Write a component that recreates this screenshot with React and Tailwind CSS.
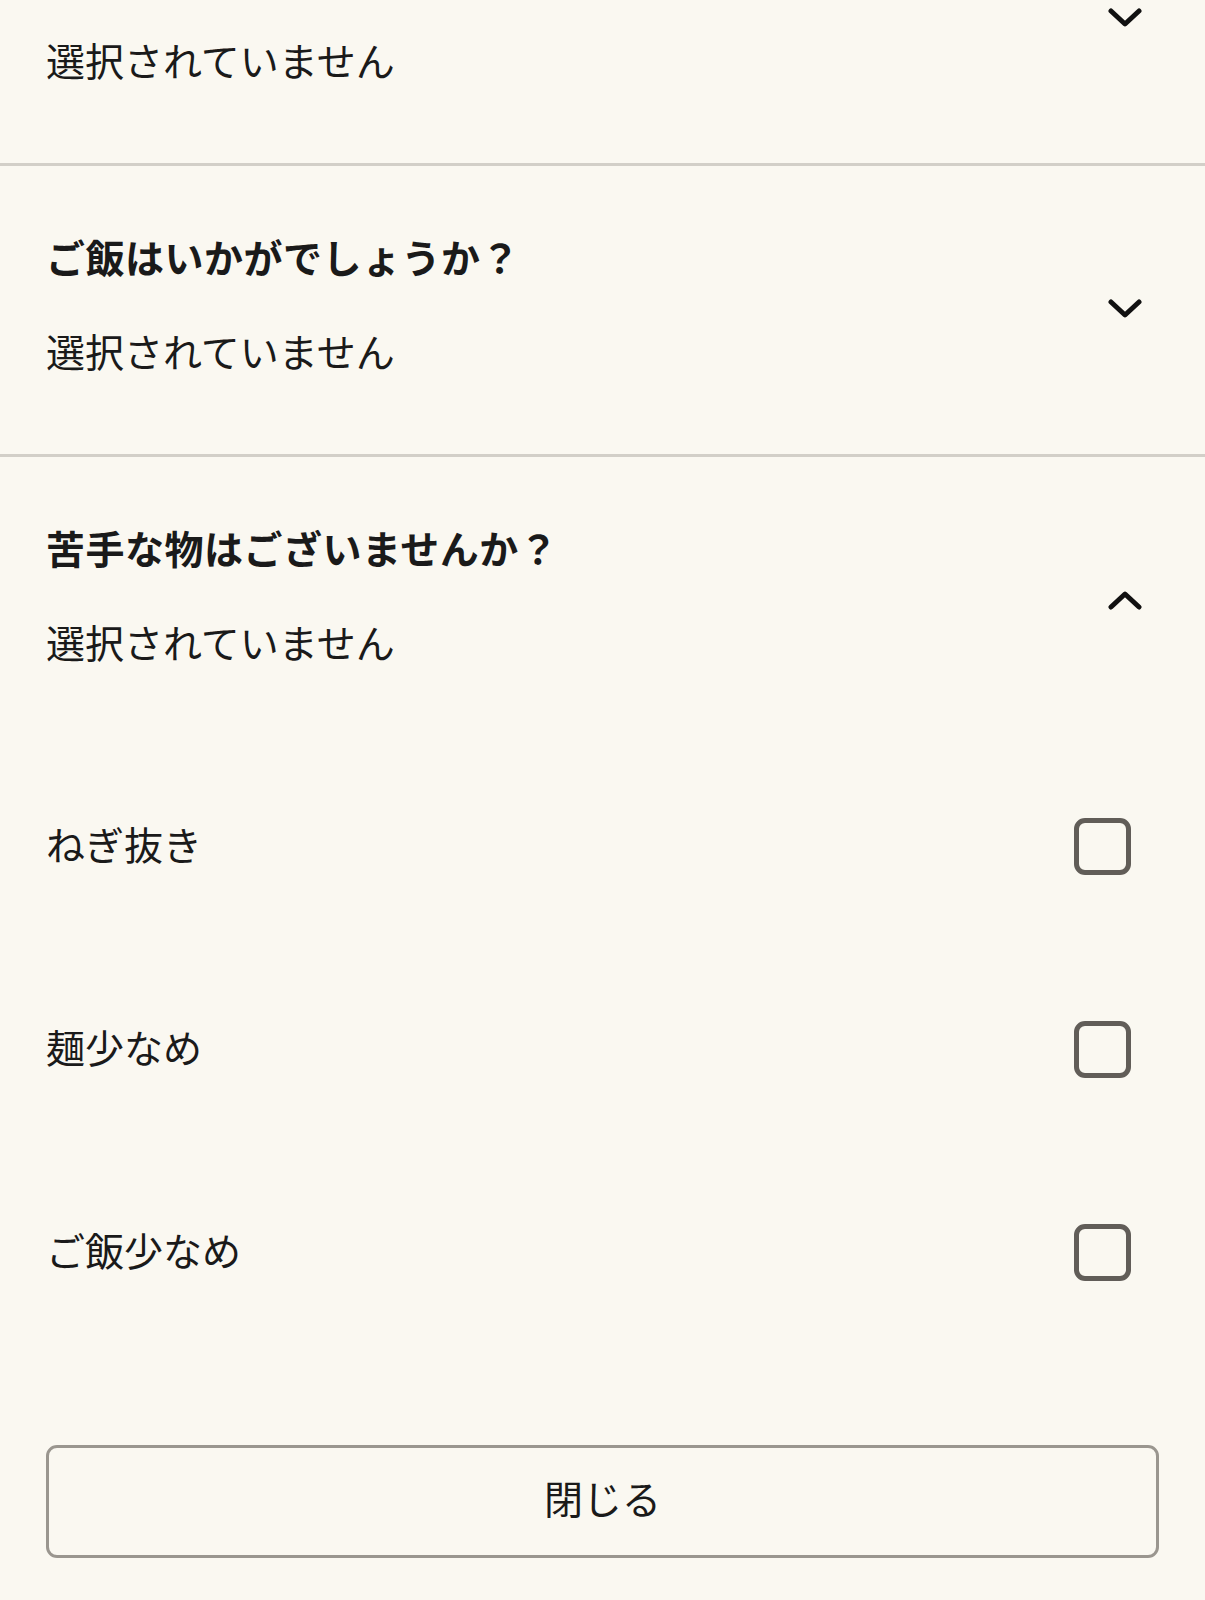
import React, { useState } from 'react';

const font = { fontFamily: '"Noto Sans CJK JP", "Noto Sans", sans-serif' };

// first question is scrolled past its title, only the value row shows
const questions = [
  { id: 'size', title: null },
  { id: 'rice', title: 'ご飯はいかがでしょうか？' },
  { id: 'dislike', title: '苦手な物はございませんか？' },
];

const options = ['ねぎ抜き', '麺少なめ', 'ご飯少なめ'];

const Chevron = ({ up }) => (
  <svg width="34" height="22" viewBox="0 0 34 22" fill="none" className="shrink-0 mt-[12px]">
    <polyline
      points={up ? '3,18 17,5 31,18' : '3,4 17,17 31,4'}
      stroke="#111"
      strokeWidth="5"
      strokeLinecap="round"
      strokeLinejoin="round"
    />
  </svg>
);

const App = () => {
  const [open, setOpen] = useState('dislike');
  const [checked, setChecked] = useState({});

  return (
    <div className="h-[1600px] overflow-hidden bg-[#faf8f1] text-[#1a1a1a]" style={font}>
      <div className="-mt-[125px]">
        {questions.map(q => (
          <div key={q.id} className="border-b-[3px] border-[#d2cfc8] last:border-b-0">
            <button
              type="button"
              onClick={() => setOpen(open === q.id ? null : q.id)}
              className="w-full flex items-center justify-between pl-[46px] pr-[63px] pt-[66px] pb-[80px] text-left"
            >
              <div className="flex flex-col gap-[46px]">
                {q.title ? (
                  <div className="text-[39px] leading-[48px] font-bold tracking-[0.5px]">{q.title}</div>
                ) : (
                  <div className="h-[48px]" />
                )}
                <div className="text-[39px] leading-[48px]">選択されていません</div>
              </div>
              <Chevron up={open === q.id} />
            </button>
            {open === q.id && q.id === 'dislike' && (
              <div>
                {options.map(o => (
                  <label
                    key={o}
                    className="h-[203px] flex items-center justify-between pl-[46px] pr-[74px] cursor-pointer"
                  >
                    <span className="text-[39px] leading-[48px] pb-[8px]">{o}</span>
                    <input
                      type="checkbox"
                      className="sr-only"
                      checked={!!checked[o]}
                      onChange={() => setChecked({ ...checked, [o]: !checked[o] })}
                    />
                    <span className="w-[57px] h-[57px] rounded-[11px] border-[5px] border-[#615d58] flex items-center justify-center">
                      {checked[o] && <span className="w-[27px] h-[27px] rounded-[4px] bg-[#615d58]" />}
                    </span>
                  </label>
                ))}
                <div className="px-[46px] pt-[91px]">
                  <button
                    type="button"
                    className="w-full h-[113px] pb-[10px] rounded-[11px] border-[3px] border-[#9a968f] text-[39px] leading-[48px]"
                  >
                    閉じる
                  </button>
                </div>
              </div>
            )}
          </div>
        ))}
      </div>
    </div>
  );
};

export default App;
